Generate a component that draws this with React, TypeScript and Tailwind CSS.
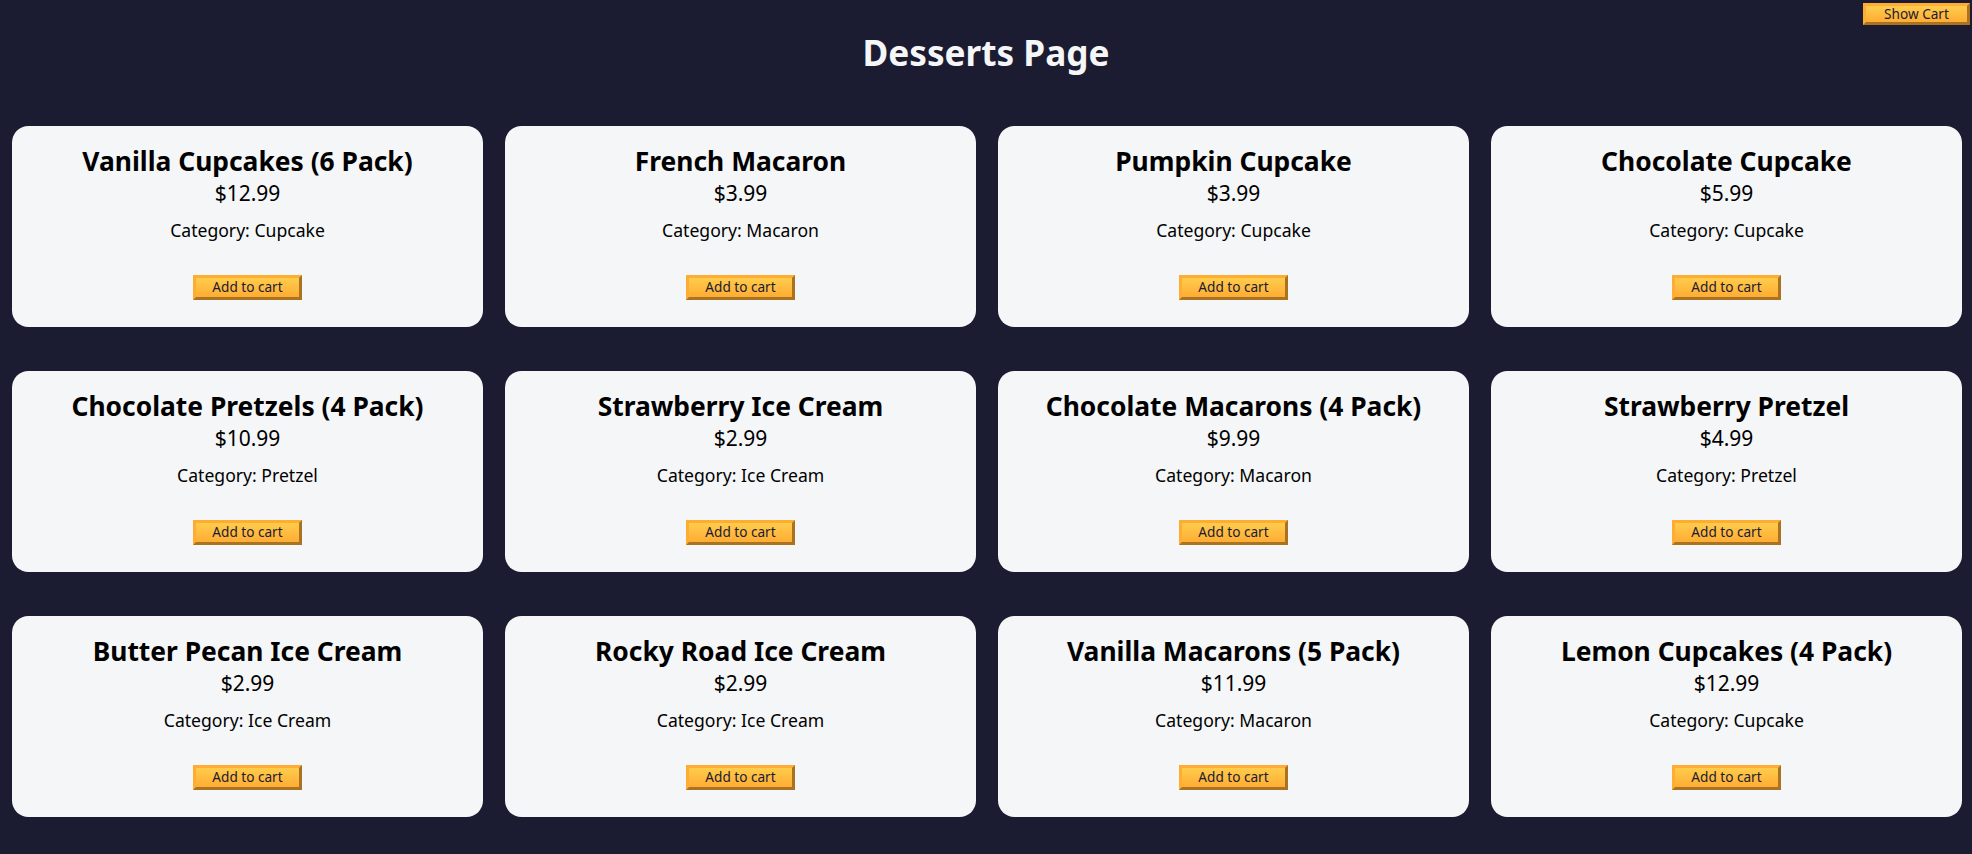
import React from 'react'

const desserts = [
  { name: 'Vanilla Cupcakes (6 Pack)', price: 12.99, category: 'Cupcake' },
  { name: 'French Macaron', price: 3.99, category: 'Macaron' },
  { name: 'Pumpkin Cupcake', price: 3.99, category: 'Cupcake' },
  { name: 'Chocolate Cupcake', price: 5.99, category: 'Cupcake' },
  { name: 'Chocolate Pretzels (4 Pack)', price: 10.99, category: 'Pretzel' },
  { name: 'Strawberry Ice Cream', price: 2.99, category: 'Ice Cream' },
  { name: 'Chocolate Macarons (4 Pack)', price: 9.99, category: 'Macaron' },
  { name: 'Strawberry Pretzel', price: 4.99, category: 'Pretzel' },
  { name: 'Butter Pecan Ice Cream', price: 2.99, category: 'Ice Cream' },
  { name: 'Rocky Road Ice Cream', price: 2.99, category: 'Ice Cream' },
  { name: 'Vanilla Macarons (5 Pack)', price: 11.99, category: 'Macaron' },
  { name: 'Lemon Cupcakes (4 Pack)', price: 12.99, category: 'Cupcake' },
]

const btn =
  'bg-gradient-to-b from-[#fecc4c] to-[#ffac33] border-[3px] [border-style:outset] border-[#feac32] text-[#1b1b32] text-[13.6px] leading-none cursor-pointer'

export default function App() {
  return (
    <div className="relative min-h-screen bg-[#1b1b32] font-['Noto_Sans',sans-serif] leading-[normal]">
      <button className={`${btn} absolute top-[3px] right-[2px] w-[107px] h-[22px]`}>Show Cart</button>

      <h1 className="pt-[28px] text-center text-[35.2px] font-bold leading-[normal] text-[#f5f6f7]">Desserts Page</h1>

      <div className="mt-[50px] grid grid-cols-[repeat(4,471px)] gap-x-[22px] gap-y-[44px] pl-[12px] pb-[40px]">
        {desserts.map((d) => (
          <div key={d.name} className="flex h-[201px] flex-col items-center rounded-[16.5px] bg-[#f5f6f7] pt-[16.5px] text-black">
            <h2 className="text-[26.4px] font-bold leading-[normal]">{d.name}</h2>
            <p className="text-[21px] leading-[normal]">${d.price}</p>
            <p className="mt-[11px] text-[17.6px] leading-[normal]">Category: {d.category}</p>
            <button className={`${btn} mt-[33px] w-[109px] h-[25px]`}>Add to cart</button>
          </div>
        ))}
      </div>
    </div>
  )
}
